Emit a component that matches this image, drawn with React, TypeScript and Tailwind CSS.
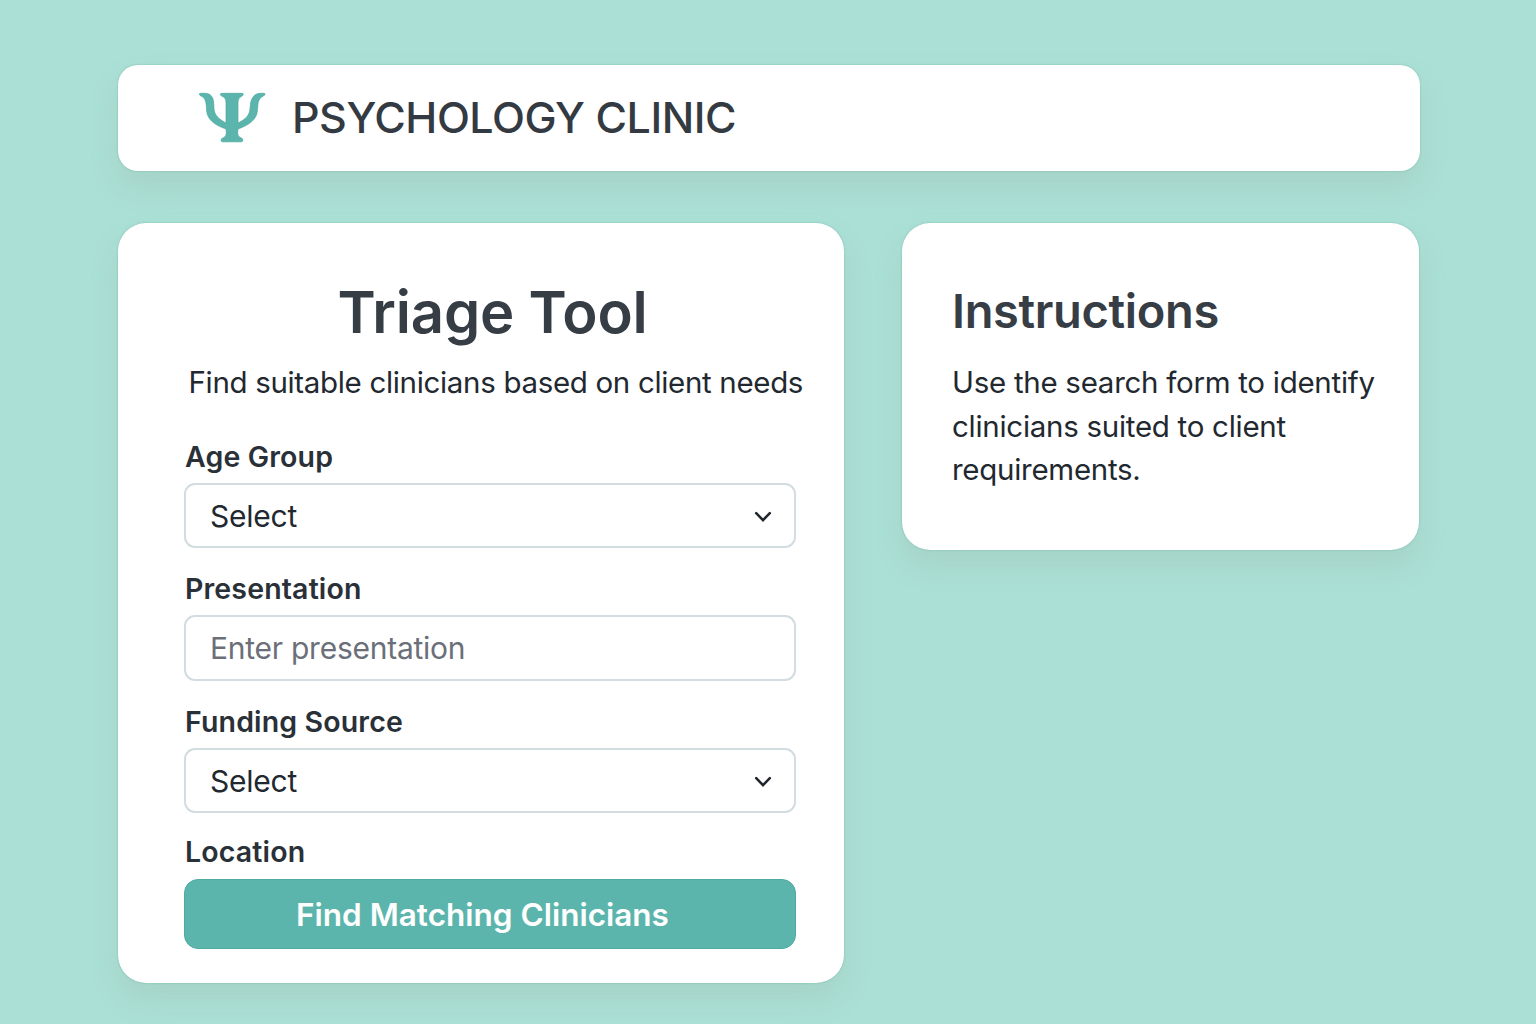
import { useState } from "react";

const PsiLogo = () => (
  <svg viewBox="54 36 207 156" className="h-[52px] w-[69px] shrink-0" aria-hidden="true">
    <path
      d="M61 40H76C92 40 100 52 101 68L102 86C103 105 116 117 138 129V66Q138 53 125 48Q121 46 121 43.500Q121 40 126 40H186Q190 40 190 43.500Q190 46 186 48Q174 53 174 66V129C198 117 209 105 210 86L211 76C212 58 222 40 240 40H252Q255.500 40 255 43Q254.500 46 250 48C238 54 234 64 233.500 78L232 94C229 118 210 134 174 147C172 162 173 170 184 174Q189 176 188.500 181Q188 185.500 184 185.500H128Q123.500 185.500 123 181Q123 176 128 174C139 170 140 162 138 147C101 134 83 118 80 94L79 78C78 62 73 52 63 48Q58.500 46 58 43Q58 40 61 40Z"
      fill="#5cb5ac"
      stroke="#49a69d"
      strokeWidth="2"
      strokeLinejoin="round"
    />
  </svg>
);

const Chevron = () => (
  <svg viewBox="0 0 20 14" className="pointer-events-none mt-[2px] h-[14px] w-[20px] shrink-0" aria-hidden="true">
    <path d="M3.200 3.200L10 10.200L16.800 3.200" fill="none" stroke="#20262e" strokeWidth="2.500" strokeLinecap="round" strokeLinejoin="miter" />
  </svg>
);

const Label = ({ children }: { children: string }) => (
  <div className="flex h-[40px] items-center whitespace-nowrap pl-px text-[28.5px] font-semibold leading-[40px] tracking-[0.15px] text-[#2a3038]">
    {children}
  </div>
);

const SelectBox = () => (
  <button
    type="button"
    className="flex h-[65px] w-full items-center justify-between rounded-[11px] border-2 border-[#d3dce0] bg-white pl-[24px] pr-[21px] text-left text-[30px] leading-[40px] tracking-[-0.25px] text-[#22282f]"
  >
    <span>Select</span>
    <Chevron />
  </button>
);

export default function App() {
  const [presentation, setPresentation] = useState("");
  return (
    <div className="h-[1024px] w-[1536px] overflow-hidden bg-[#abe0d6] pl-[118px] pt-[65px] font-['Inter','Liberation_Sans',sans-serif]">
      <header className="flex h-[106px] w-[1302px] items-center rounded-[20px] bg-white pl-[80px] shadow-[0_16px_28px_0_rgba(140,150,130,0.17),0_0_2px_rgba(80,170,150,0.6)]">
        <PsiLogo />
        <h1 className="-mt-[2px] ml-[25px] whitespace-nowrap text-[43px] font-medium leading-[52px] tracking-[-0.48px] text-[#333a42]">
          PSYCHOLOGY CLINIC
        </h1>
      </header>

      <main className="mt-[52px] flex items-start gap-[58px]">
        <section className="h-[760px] w-[726px] rounded-[28px] bg-white px-[66px] pt-[54px] shadow-[0_16px_28px_0_rgba(140,150,130,0.17),0_0_2px_rgba(80,170,150,0.6)]">
          <h2 className="w-[617px] whitespace-nowrap text-center text-[58px] font-semibold leading-[70px] tracking-[-0.15px] text-[#363d45]">
            Triage Tool
          </h2>
          <p className="mt-[15px] whitespace-nowrap pl-[4.500px] text-[29.5px] leading-[40px] tracking-[-0.33px] text-[#22282f]">
            Find suitable clinicians based on client needs
          </p>
          <form className="mt-[35px] flex w-[612px] flex-col" onSubmit={(e) => e.preventDefault()}>
            <Label>Age Group</Label>
            <div className="mt-[6px]">
              <SelectBox />
            </div>
            <div className="mt-[21px]">
              <Label>Presentation</Label>
            </div>
            <input
              value={presentation}
              onChange={(e) => setPresentation(e.target.value)}
              placeholder="Enter presentation"
              className="mt-[6px] h-[66px] w-full rounded-[11px] border-2 border-[#d3dce0] bg-white px-[24px] text-[30px] leading-[40px] tracking-[-0.25px] text-[#22282f] placeholder:text-[#6b6f79]"
            />
            <div className="mt-[21px]">
              <Label>Funding Source</Label>
            </div>
            <div className="mt-[6px]">
              <SelectBox />
            </div>
            <div className="mt-[19px]">
              <Label>Location</Label>
            </div>
            <button
              type="submit"
              className="mt-[7px] flex h-[70px] w-full items-center justify-center whitespace-nowrap rounded-[14px] border border-[#4eaba1] bg-[#5cb5ac] pr-[15px] pt-[2px] text-[31.5px] font-semibold leading-[40px] text-white"
            >
              Find Matching Clinicians
            </button>
          </form>
        </section>

        <aside className="h-[327px] w-[517px] rounded-[28px] bg-white pl-[50px] pt-[58px] shadow-[0_16px_28px_0_rgba(140,150,130,0.17),0_0_2px_rgba(80,170,150,0.6)]">
          <h2 className="whitespace-nowrap text-[47px] font-semibold leading-[60px] tracking-[-0.35px] text-[#363d45]">Instructions</h2>
          <p className="mt-[20px] whitespace-nowrap text-[29.5px] leading-[43.500px] tracking-[-0.28px] text-[#22282f]">
            Use the search form to identify
            <br />
            clinicians suited to client
            <br />
            requirements.
          </p>
        </aside>
      </main>
    </div>
  );
}
